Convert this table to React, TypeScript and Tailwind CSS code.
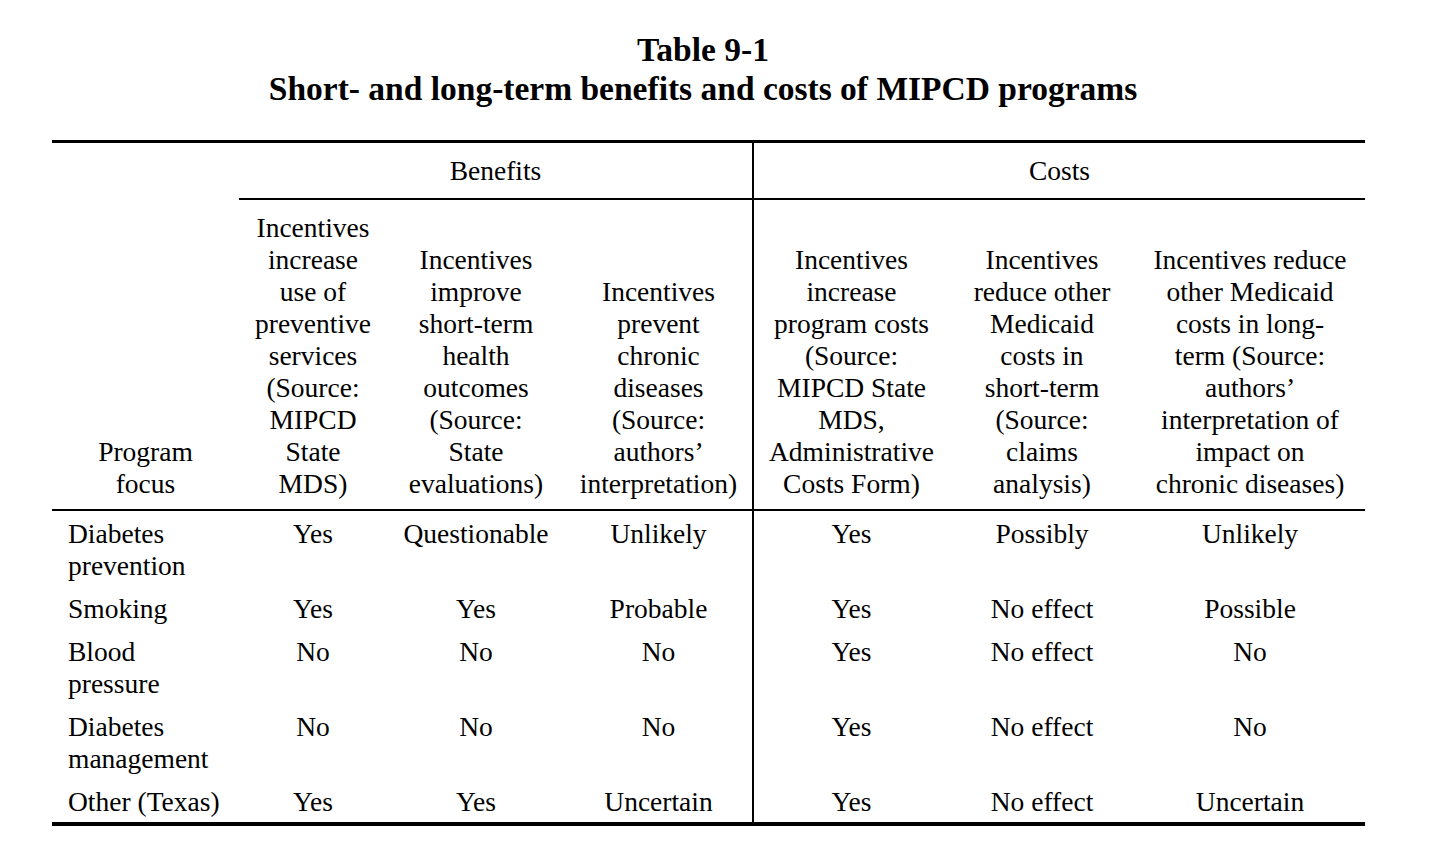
import React from "react";

const serif = { fontFamily: "'Liberation Serif', 'Times New Roman', serif" };

const headers: string[][] = [
  ["Incentives", "increase", "use of", "preventive", "services", "(Source:", "MIPCD", "State", "MDS)"],
  ["Incentives", "improve", "short-term", "health", "outcomes", "(Source:", "State", "evaluations)"],
  ["Incentives", "prevent", "chronic", "diseases", "(Source:", "authors\u2019", "interpretation)"],
  ["Incentives", "increase", "program costs", "(Source:", "MIPCD State", "MDS,", "Administrative", "Costs Form)"],
  ["Incentives", "reduce other", "Medicaid", "costs in", "short-term", "(Source:", "claims", "analysis)"],
  ["Incentives reduce", "other Medicaid", "costs in long-", "term (Source:", "authors\u2019", "interpretation of", "impact on", "chronic diseases)"],
];

const rows: { label: string[]; values: string[] }[] = [
  { label: ["Diabetes", "prevention"], values: ["Yes", "Questionable", "Unlikely", "Yes", "Possibly", "Unlikely"] },
  { label: ["Smoking"], values: ["Yes", "Yes", "Probable", "Yes", "No effect", "Possible"] },
  { label: ["Blood", "pressure"], values: ["No", "No", "No", "Yes", "No effect", "No"] },
  { label: ["Diabetes", "management"], values: ["No", "No", "No", "Yes", "No effect", "No"] },
  { label: ["Other (Texas)"], values: ["Yes", "Yes", "Uncertain", "Yes", "No effect", "Uncertain"] },
];

function Lines({ lines }: { lines: string[] }) {
  return (
    <>
      {lines.map((l, i) => (
        <div key={i} className="whitespace-nowrap">
          {l}
        </div>
      ))}
    </>
  );
}

export default function App() {
  return (
    <div className="min-h-[849px] w-[1447px] bg-white text-black" style={serif}>
      <div className="ml-[52px] w-[1302px] pt-[31px] text-center text-[33.5px] font-bold leading-[38.5px]">
        <div>Table 9-1</div>
        <div>Short- and long-term benefits and costs of MIPCD programs</div>
      </div>

      <div className="ml-[52px] mt-[32px] grid w-[1313px] grid-cols-[187px_148px_178px_187px_197px_186px_230px] border-t-[3px] border-b-4 border-black text-[27.5px] leading-[32px]">
        {/* Row A */}
        <div className="row-span-2 flex flex-col justify-end border-b-2 border-black pb-[9px] text-center">
          <Lines lines={["Program", "focus"]} />
        </div>
        <div className="col-span-3 border-b-2 border-black pt-[12px] pb-[11px] text-center">Benefits</div>
        <div className="col-span-3 border-b-2 border-l-2 border-black pt-[12px] pb-[11px] text-center">Costs</div>

        {/* Row B */}
        {headers.map((h, i) => (
          <div
            key={i}
            className={
              i === 3
                ? "flex flex-col justify-end border-b-2 border-l-2 border-black pt-[12px] pb-[9px] text-center"
                : "flex flex-col justify-end border-b-2 border-black pt-[12px] pb-[9px] text-center"
            }
          >
            <Lines lines={h} />
          </div>
        ))}

        {/* Data rows */}
        {rows.map((r, ri) => (
          <React.Fragment key={ri}>
            <div className="pt-[7px] pb-[4px] pl-[16px] text-left">
              <Lines lines={r.label} />
            </div>
            {r.values.map((v, vi) => (
              <div
                key={vi}
                className={
                  vi === 3
                    ? "pt-[7px] pb-[4px] border-l-2 border-black text-center whitespace-nowrap"
                    : "pt-[7px] pb-[4px] text-center whitespace-nowrap"
                }
              >
                {v}
              </div>
            ))}
          </React.Fragment>
        ))}
      </div>
    </div>
  );
}
